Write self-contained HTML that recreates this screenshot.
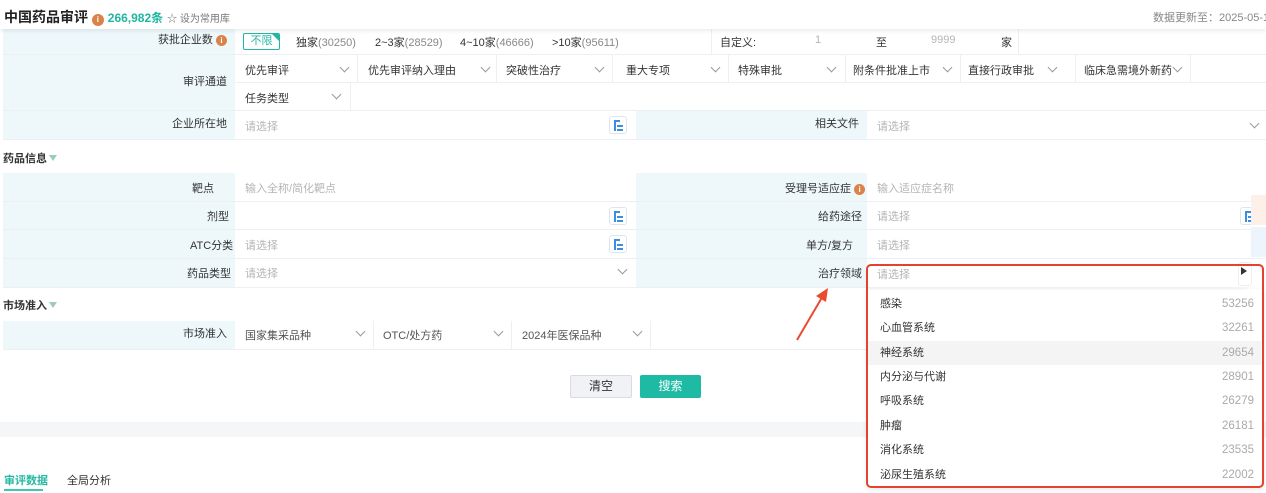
<!DOCTYPE html>
<html><head><meta charset="utf-8"><style>
*{margin:0;padding:0;box-sizing:border-box}
body{width:1266px;height:493px;overflow:hidden;background:#fff;font-family:"Liberation Sans","Noto Sans CJK SC",sans-serif;font-size:11px;color:#333;position:relative}
.a{position:absolute;white-space:nowrap}
.lb{position:absolute;background:#eef8fb;text-align:right;padding-right:8px;color:#333}
.ln{position:absolute;background:#edf0f2}
.ph{color:#b5b5b5}
.chev{position:absolute;width:7px;height:7px;border-right:1px solid #999;border-bottom:1px solid #999;transform:rotate(45deg)}
.tree{position:absolute;width:18px;height:18px;border:1px solid #dde6ee;border-radius:3px;background:#fff}
.tree i{position:absolute;background:#3b8fe0;height:2px}
.sec{font-weight:bold;font-size:11px}
.tri{display:inline-block;width:0;height:0;border-left:4px solid transparent;border-right:4px solid transparent;border-top:6px solid #9cc9c0;margin-left:2px;vertical-align:1px}
.info{display:inline-block;width:11px;height:11px;border-radius:50%;background:#d9834a;color:#fff;font-size:8px;text-align:center;line-height:11px;font-weight:bold;vertical-align:0}
.it{position:absolute;left:867px;width:394px;height:24px;line-height:24px;padding:0 7px 0 13px;font-size:11px}
.it span{float:right;color:#aaa;font-size:11.5px}
</style></head><body>
<!-- header -->
<div class="a" style="left:0;top:0;width:1266px;height:29px;background:#fff;box-shadow:0 2px 4px rgba(0,0,0,.08);z-index:2"></div>
<div class="a" style="left:4px;top:7px;font-size:14px;font-weight:bold;color:#222;z-index:3">中国药品审评 <span class="info" style="width:12px;height:12px;line-height:12px">i</span> <span style="color:#1eb6a0;font-size:12px">266,982条</span> <span style="font-weight:normal;font-size:10px;color:#777">☆ 设为常用库</span></div>
<div class="a" style="left:1153px;top:9px;color:#888;font-size:11px;z-index:3">数据更新至：2025-05-1</div>

<!-- row 1 -->
<div class="lb" style="left:3px;top:29px;width:232px;height:26px;line-height:22px">获批企业数 <span class="info">i</span></div>
<div class="a" style="left:243px;top:33px;width:37px;height:17px;border:1px solid #23b7a3;border-radius:2px;color:#23b7a3;text-align:center;line-height:15px;overflow:hidden">不限<div style="position:absolute;right:0;top:0;border-top:7px solid #23b7a3;border-left:7px solid transparent"></div></div>
<div class="a" style="left:296px;top:34px">独家<span style="color:#888">(30250)</span></div>
<div class="a" style="left:375px;top:34px">2~3家<span style="color:#888">(28529)</span></div>
<div class="a" style="left:460px;top:34px">4~10家<span style="color:#888">(46666)</span></div>
<div class="a" style="left:552px;top:34px">&gt;10家<span style="color:#888">(95611)</span></div>
<div class="ln" style="left:711px;top:29px;width:1px;height:26px"></div>
<div class="a" style="left:720px;top:34px">自定义:</div>
<div class="a ph" style="left:815px;top:34px">1</div>
<div class="a" style="left:876px;top:34px">至</div>
<div class="a ph" style="left:931px;top:34px">9999</div>
<div class="a" style="left:1001px;top:34px">家</div>
<div class="ln" style="left:1018px;top:29px;width:1px;height:26px"></div>
<div class="ln" style="left:3px;top:54px;width:1263px;height:1px"></div>

<!-- 审评通道 -->
<div class="lb" style="left:3px;top:55px;width:232px;height:56px;line-height:54px">审评通道</div>
<div class="a" style="left:245px;top:62px">优先审评</div><div class="chev" style="left:341px;top:64px"></div>
<div class="ln" style="left:357px;top:55px;width:1px;height:28px"></div>
<div class="a" style="left:368px;top:62px">优先审评纳入理由</div><div class="chev" style="left:482px;top:64px"></div>
<div class="ln" style="left:496px;top:55px;width:1px;height:28px"></div>
<div class="a" style="left:506px;top:62px">突破性治疗</div><div class="chev" style="left:596px;top:64px"></div>
<div class="ln" style="left:612px;top:55px;width:1px;height:28px"></div>
<div class="a" style="left:626px;top:62px">重大专项</div><div class="chev" style="left:712px;top:64px"></div>
<div class="ln" style="left:728px;top:55px;width:1px;height:28px"></div>
<div class="a" style="left:738px;top:62px">特殊审批</div><div class="chev" style="left:828px;top:64px"></div>
<div class="ln" style="left:845px;top:55px;width:1px;height:28px"></div>
<div class="a" style="left:853px;top:62px">附条件批准上市</div><div class="chev" style="left:944px;top:64px"></div>
<div class="ln" style="left:960px;top:55px;width:1px;height:28px"></div>
<div class="a" style="left:968px;top:62px">直接行政审批</div><div class="chev" style="left:1049px;top:64px"></div>
<div class="ln" style="left:1075px;top:55px;width:1px;height:28px"></div>
<div class="a" style="left:1084px;top:62px">临床急需境外新药</div><div class="chev" style="left:1174px;top:64px"></div>
<div class="ln" style="left:1190px;top:55px;width:1px;height:28px"></div>
<div class="ln" style="left:235px;top:82px;width:1031px;height:1px"></div>
<div class="a" style="left:245px;top:90px">任务类型</div><div class="chev" style="left:333px;top:91px"></div>
<div class="ln" style="left:350px;top:83px;width:1px;height:28px"></div>
<div class="ln" style="left:3px;top:110px;width:1263px;height:1px"></div>

<!-- 企业所在地 -->
<div class="lb" style="left:3px;top:111px;width:232px;height:28px;line-height:26px">企业所在地</div>
<div class="a ph" style="left:245px;top:118px">请选择</div>
<div class="tree" style="left:609px;top:116px"><i style="left:4px;top:3px;width:6px"></i><i style="left:4px;top:3px;width:2px;height:11px"></i><i style="left:7px;top:8px;width:6px"></i><i style="left:7px;top:12px;width:6px"></i></div>
<div class="lb" style="left:636px;top:111px;width:231px;height:28px;line-height:26px">相关文件</div>
<div class="a ph" style="left:877px;top:118px">请选择</div><div class="chev" style="left:1251px;top:120px"></div>
<div class="ln" style="left:3px;top:139px;width:1263px;height:1px"></div>

<!-- 药品信息 -->
<div class="a sec" style="left:3px;top:150px">药品信息<span class="tri"></span></div>
<div class="lb" style="left:3px;top:173px;width:232px;height:114px"></div>
<div class="lb" style="left:636px;top:173px;width:231px;height:114px"></div>
<div class="a" style="left:192px;top:180px">靶点</div>
<div class="a ph" style="left:245px;top:180px">输入全称/简化靶点</div>
<div class="a" style="left:785px;top:180px">受理号适应症 <span class="info">i</span></div>
<div class="a ph" style="left:877px;top:180px">输入适应症名称</div>
<div class="a" style="left:207px;top:208px">剂型</div>
<div class="tree" style="left:609px;top:207px"><i style="left:4px;top:3px;width:6px"></i><i style="left:4px;top:3px;width:2px;height:11px"></i><i style="left:7px;top:8px;width:6px"></i><i style="left:7px;top:12px;width:6px"></i></div>
<div class="a" style="left:818px;top:208px">给药途径</div>
<div class="a ph" style="left:877px;top:208px">请选择</div>
<div class="tree" style="left:1240px;top:207px"><i style="left:4px;top:3px;width:6px"></i><i style="left:4px;top:3px;width:2px;height:11px"></i><i style="left:7px;top:8px;width:6px"></i><i style="left:7px;top:12px;width:6px"></i></div>
<div class="a" style="left:190px;top:237px">ATC分类</div>
<div class="a ph" style="left:245px;top:237px">请选择</div>
<div class="tree" style="left:609px;top:235px"><i style="left:4px;top:3px;width:6px"></i><i style="left:4px;top:3px;width:2px;height:11px"></i><i style="left:7px;top:8px;width:6px"></i><i style="left:7px;top:12px;width:6px"></i></div>
<div class="a" style="left:806px;top:237px">单方/复方</div>
<div class="a ph" style="left:877px;top:237px">请选择</div>
<div class="a" style="left:187px;top:265px">药品类型</div>
<div class="a ph" style="left:245px;top:265px">请选择</div><div class="chev" style="left:619px;top:266px"></div>
<div class="a" style="left:818px;top:265px">治疗领域</div>
<div class="ln" style="left:3px;top:201px;width:1263px;height:1px"></div>
<div class="ln" style="left:3px;top:229px;width:1263px;height:1px"></div>
<div class="ln" style="left:3px;top:258px;width:1263px;height:1px"></div>
<div class="ln" style="left:3px;top:287px;width:866px;height:1px"></div>
<div class="a" style="left:1251px;top:195px;width:15px;height:30px;background:#fdf0e8"></div>
<div class="a" style="left:1251px;top:227px;width:15px;height:30px;background:#eef4fc"></div>

<!-- 市场准入 -->
<div class="a sec" style="left:3px;top:297px">市场准入<span class="tri"></span></div>
<div class="lb" style="left:3px;top:321px;width:232px;height:28px;line-height:26px">市场准入</div>
<div class="a" style="left:245px;top:327px;color:#555">国家集采品种</div><div class="chev" style="left:357px;top:328px"></div>
<div class="ln" style="left:373px;top:321px;width:1px;height:28px"></div>
<div class="a" style="left:383px;top:327px;color:#555">OTC/处方药</div><div class="chev" style="left:495px;top:328px"></div>
<div class="ln" style="left:511px;top:321px;width:1px;height:28px"></div>
<div class="a" style="left:522px;top:327px;color:#555">2024年医保品种</div><div class="chev" style="left:634px;top:328px"></div>
<div class="ln" style="left:650px;top:321px;width:1px;height:28px"></div>
<div class="ln" style="left:3px;top:349px;width:866px;height:1px"></div>

<!-- buttons -->
<div class="a" style="left:570px;top:375px;width:62px;height:23px;background:#f0f2f5;border:1px solid #d8dce2;border-radius:2px;text-align:center;line-height:21px;font-size:12px">清空</div>
<div class="a" style="left:640px;top:375px;width:61px;height:23px;background:#1fbaa4;border-radius:2px;color:#fff;text-align:center;line-height:23px;font-size:12px">搜索</div>

<div class="a" style="left:0;top:422px;width:1266px;height:15px;background:#f5f6f8"></div>
<div class="a" style="left:4px;top:472px;color:#23b7a3;font-weight:bold">审评数据</div>
<div class="a" style="left:4px;top:489px;width:39px;height:2px;background:#3cc8b4"></div>
<div class="a" style="left:67px;top:472px;color:#333">全局分析</div>

<!-- dropdown -->
<div class="a" style="left:867px;top:289px;width:396px;height:198px;background:#fff;box-shadow:0 2px 6px rgba(0,0,0,.1)"></div>
<div class="a" style="left:867px;top:265px;width:380px;height:22px;background:#fff;box-shadow:0 2px 3px rgba(0,0,0,.05)"></div>
<div class="a ph" style="left:877px;top:266px">请选择</div>
<div class="a" style="left:1238px;top:262px;width:14px;height:24px;background:#fff;border:1px solid #eee;border-radius:3px"></div>
<div class="a" style="left:1241px;top:267px;border-left:6px solid #333;border-top:4px solid transparent;border-bottom:4px solid transparent"></div>
<div class="a" style="left:868px;top:341px;width:393px;height:24px;background:#f4f4f4"></div>
<div class="it" style="top:292px">感染<span>53256</span></div>
<div class="it" style="top:316px">心血管系统<span>32261</span></div>
<div class="it" style="top:341px">神经系统<span>29654</span></div>
<div class="it" style="top:365px">内分泌与代谢<span>28901</span></div>
<div class="it" style="top:389px">呼吸系统<span>26279</span></div>
<div class="it" style="top:414px">肿瘤<span>26181</span></div>
<div class="it" style="top:438px">消化系统<span>23535</span></div>
<div class="it" style="top:463px">泌尿生殖系统<span>22002</span></div>
<div class="a" style="left:866px;top:264px;width:398px;height:224px;border:2px solid #e5412f;border-radius:5px"></div>

<svg class="a" style="left:790px;top:282px" width="45" height="65"><line x1="7" y1="58" x2="34" y2="12" stroke="#ea4a30" stroke-width="2"/><polygon points="38,6 26,14 36,20" fill="#ea4a30"/></svg>
</body></html>
